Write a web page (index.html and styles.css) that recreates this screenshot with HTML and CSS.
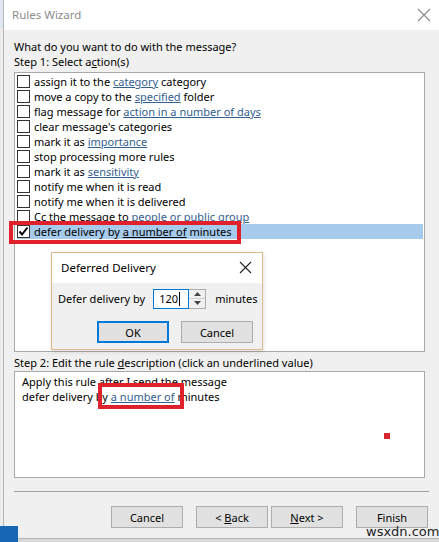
FILE: index.html
```html
<!DOCTYPE html>
<html>
<head>
<meta charset="utf-8">
<link rel="stylesheet" href="styles.css">
</head>
<body>
<div class="screen">
  <div class="desk-strip"></div>
  <div class="window">
    <div class="titlebar">
      <span class="title">Rules Wizard</span>
      <svg class="close" width="14" height="14" viewBox="0 0 14 14"><path d="M1 1 L13 13 M13 1 L1 13" stroke="#8a8a8a" stroke-width="1.1" fill="none"/></svg>
    </div>
    <div class="content">
      <div class="label">What do you want to do with the message?</div>
      <div class="label">Step 1: Select a<u>c</u>tion(s)</div>
      <div class="listbox">
        <div class="row"><span class="cb"></span><span>assign it to the <a>category</a> category</span></div>
        <div class="row"><span class="cb"></span><span>move a copy to the <a>specified</a> folder</span></div>
        <div class="row"><span class="cb"></span><span>flag message for <a>action in a number of days</a></span></div>
        <div class="row"><span class="cb"></span><span>clear message's categories</span></div>
        <div class="row"><span class="cb"></span><span>mark it as <a>importance</a></span></div>
        <div class="row"><span class="cb"></span><span>stop processing more rules</span></div>
        <div class="row"><span class="cb"></span><span>mark it as <a>sensitivity</a></span></div>
        <div class="row"><span class="cb"></span><span>notify me when it is read</span></div>
        <div class="row"><span class="cb"></span><span>notify me when it is delivered</span></div>
        <div class="row"><span class="cb"></span><span>Cc the message to <a>people or public group</a></span></div>
        <div class="row selected"><span class="cb checked"><svg width="11" height="11" viewBox="0 0 11 11"><path d="M1.5 5.5 L4 8.5 L9.5 1.5" stroke="#000" stroke-width="2" fill="none"/></svg></span><span>defer delivery by <a class="sel-link">a number of</a> minutes</span></div>
      </div>
      <div class="label step2">Step 2: Edit the rule <u>d</u>escription (click an underlined value)</div>
      <div class="descbox">
        <div class="dline">Apply this rule after I send the message</div>
        <div class="dline">defer delivery by <a>a number of</a> minutes</div>
      </div>
      <div class="separator"></div>
      <div class="footer">
        <button class="btn">Cancel</button>
        <button class="btn gap-s">&lt; <u>B</u>ack</button>
        <button class="btn"><u>N</u>ext &gt;</button>
        <button class="btn gap-s">Finish</button>
      </div>
    </div>
  </div>

  <div class="dialog">
    <div class="dlg-title">
      <span>Deferred Delivery</span>
      <svg width="13" height="13" viewBox="0 0 13 13"><path d="M1 1 L12 12 M12 1 L1 12" stroke="#222" stroke-width="1.1" fill="none"/></svg>
    </div>
    <div class="dlg-body">
      <div class="dlg-row">
        <span class="nowrap">Defer delivery by</span>
        <div class="spin">
          <div class="spin-input">120<span class="caret"></span></div>
          <div class="spin-btns">
            <div class="sb"><svg width="7" height="4" viewBox="0 0 7 4"><path d="M0 4 L3.5 0 L7 4 Z" fill="#444"/></svg></div>
            <div class="sb"><svg width="7" height="4" viewBox="0 0 7 4"><path d="M0 0 L3.5 4 L7 0 Z" fill="#444"/></svg></div>
          </div>
        </div>
        <span class="nowrap">minutes</span>
      </div>
      <div class="dlg-btns">
        <button class="btn ok">OK</button>
        <button class="btn">Cancel</button>
      </div>
    </div>
  </div>

  <div class="mark mark-row"></div>
  <div class="mark mark-link"></div>
  <div class="dot"></div>
  <div class="taskbar-corner"></div>
  <div class="watermark">wsxdn.com</div>
</div>
</body>
</html>
```
FILE: styles.css
```css
* { box-sizing: border-box; }
html, body { margin: 0; padding: 0; }
body {
  font-family: "Segoe UI", "Noto Sans", "Open Sans", sans-serif;
  font-size: 11px;
  color: #000;
  background: #f0f0f0;
}
.nowrap { white-space: nowrap; }
.screen {
  position: relative;
  width: 439px;
  height: 542px;
  display: flex;
  overflow: hidden;
  background: #d8d8d8;
}
.desk-strip {
  width: 3px;
  background: linear-gradient(#dfe8f2 0, #dfe8f2 28px, #ececec 28px);
}
.window {
  width: 436px;
  height: 539px;
  border-left: 1px solid #b4b4b4;
  border-bottom: 1px solid #b4b4b4;
  display: flex;
  flex-direction: column;
  background: #f0f0f0;
}
.titlebar {
  height: 30px;
  background: #fff;
  display: flex;
  align-items: center;
  justify-content: space-between;
  padding: 0 8px 1px 8px;
}
.title { color: #8c8c8c; font-size: 11.5px; }
.content {
  flex: 1;
  padding: 9px 10px 0 10px;
  display: flex;
  flex-direction: column;
}
.label { line-height: 15px; height: 15px; white-space: nowrap; }
a { color: #34608f; text-decoration: underline; }
.listbox {
  margin-top: 3px;
  width: 411px;
  height: 280px;
  background: #fff;
  border: 1px solid #a9a9a9;
  padding: 1px 1px 0 2px;
}
.row {
  height: 15px;
  line-height: 15px;
  display: flex;
  align-items: center;
  gap: 4px;
  white-space: nowrap;
}
.row.selected { background: #a6cbec; }
.cb {
  width: 13px;
  height: 13px;
  border: 1px solid #333;
  background: #fff;
  flex: none;
  display: flex;
  align-items: center;
  justify-content: center;
}
.sel-link { color: #000; }
.step2 { margin-top: 3px; }
.descbox {
  margin-top: 1px;
  width: 411px;
  height: 107px;
  background: #fff;
  border: 1px solid #a9a9a9;
  padding: 2px 7px;
}
.dline { line-height: 15px; height: 15px; white-space: nowrap; }
.separator {
  margin-top: 13px;
  width: 415px;
  height: 1px;
  background: #a0a0a0;
}
.footer {
  margin-top: 14px;
  display: flex;
  justify-content: flex-end;
  gap: 3px;
  padding-right: 1px;
}
.btn {
  font-family: inherit;
  font-size: 11px;
  width: 72px;
  height: 22px;
  background: #e1e1e1;
  border: 1px solid #adadad;
  padding: 0;
  color: #000;
}
.gap-s { margin-left: 10px; }
.dialog {
  position: absolute;
  left: 51px;
  top: 252px;
  width: 212px;
  height: 98px;
  border: 1px solid #dfb98c;
  background: #f0f0f0;
  box-shadow: 1px 2px 4px rgba(0,0,0,0.12);
  display: flex;
  flex-direction: column;
}
.dlg-title {
  height: 30px;
  background: #fff;
  display: flex;
  align-items: center;
  justify-content: space-between;
  padding: 0 10px 2px 9px;
  font-size: 11.5px;
}
.dlg-body { padding: 5px 7px 0 6px; }
.dlg-row {
  display: flex;
  align-items: center;
  height: 21px;
}
.spin { display: flex; margin-left: 8px; margin-right: 9px; }
.spin-input {
  width: 36px;
  height: 20px;
  border: 1px solid #0078d7;
  background: #fff;
  padding-left: 5px;
  display: flex;
  align-items: center;
}
.caret { width: 1px; height: 14px; background: #000; margin-left: 1px; }
.spin-btns {
  width: 17px;
  height: 20px;
  border: 1px solid #adadad;
  border-left: none;
  background: #f0f0f0;
  display: flex;
  flex-direction: column;
}
.sb { flex: 1; display: flex; align-items: center; justify-content: center; }
.sb:first-child { border-bottom: 1px solid #d0d0d0; }
.dlg-btns {
  display: flex;
  gap: 12px;
  margin-top: 12px;
  padding-left: 39px;
}
.ok { border: 2px solid #0078d7; }
.mark {
  position: absolute;
  border: 4px solid #e0202b;
}
.mark-row { left: 9px; top: 221px; width: 232px; height: 23px; }
.mark-link { left: 98px; top: 383px; width: 86px; height: 26px; }
.dot {
  position: absolute;
  left: 384px;
  top: 433px;
  width: 6px;
  height: 6px;
  background: #d9252c;
}
.taskbar-corner {
  position: absolute;
  left: 0;
  top: 526px;
  width: 18px;
  height: 16px;
  background: #1666b3;
}
.watermark {
  position: absolute;
  left: 366px;
  top: 524px;
  font-family: "DejaVu Sans", sans-serif;
  font-size: 13px;
  line-height: 15px;
  color: #222;
}
```
